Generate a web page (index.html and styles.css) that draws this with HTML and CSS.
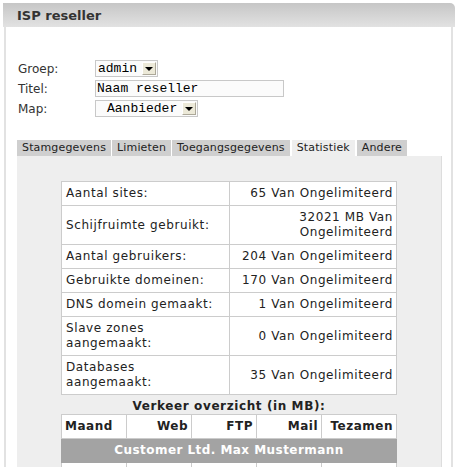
FILE: index.html
```html
<!DOCTYPE html>
<html>
<head>
<meta charset="utf-8">
<link rel="stylesheet" href="styles.css">
</head>
<body>
<div class="box">
  <div class="box-head">ISP reseller</div>
  <div class="box-body">
    <div class="form">
      <div class="frow">
        <span class="flabel">Groep:</span>
        <span class="sel sel-admin"><span class="sel-text">admin</span><span class="arrow"></span></span>
      </div>
      <div class="frow">
        <span class="flabel">Titel:</span>
        <span class="inp">Naam reseller</span>
      </div>
      <div class="frow">
        <span class="flabel">Map:</span>
        <span class="sel sel-map"><span class="sel-text">Aanbieder</span><span class="arrow"></span></span>
      </div>
    </div>
    <div class="tabs">
      <span class="tab">Stamgegevens</span>
      <span class="tab">Limieten</span>
      <span class="tab">Toegangsgegevens</span>
      <span class="tab active">Statistiek</span>
      <span class="tab">Andere</span>
    </div>
    <div class="tabpanel">
      <table class="stats">
        <tr><td class="k">Aantal sites:</td><td class="v">65 Van Ongelimiteerd</td></tr>
        <tr><td class="k">Schijfruimte gebruikt:</td><td class="v">32021 MB Van<br>Ongelimiteerd</td></tr>
        <tr><td class="k">Aantal gebruikers:</td><td class="v">204 Van Ongelimiteerd</td></tr>
        <tr><td class="k">Gebruikte domeinen:</td><td class="v">170 Van Ongelimiteerd</td></tr>
        <tr><td class="k">DNS domein gemaakt:</td><td class="v">1 Van Ongelimiteerd</td></tr>
        <tr><td class="k">Slave zones<br>aangemaakt:</td><td class="v">0 Van Ongelimiteerd</td></tr>
        <tr><td class="k">Databases<br>aangemaakt:</td><td class="v">35 Van Ongelimiteerd</td></tr>
      </table>
      <div class="traffic-title">Verkeer overzicht (in MB):</div>
      <table class="traffic">
        <tr class="th"><td class="left">Maand</td><td>Web</td><td>FTP</td><td>Mail</td><td>Tezamen</td></tr>
        <tr class="cust"><td colspan="5">Customer Ltd. Max Mustermann</td></tr>
        <tr class="row"><td class="left">&nbsp;</td><td>&nbsp;</td><td>&nbsp;</td><td>&nbsp;</td><td>&nbsp;</td></tr>
      </table>
    </div>
  </div>
</div>
</body>
</html>
```

FILE: styles.css
```css
html, body { margin: 0; padding: 0; background: #fff; }
body {
  padding: 3px 0 0 3px;
  font-family: "DejaVu Sans", Verdana, sans-serif;
  font-size: 11px;
  color: #333;
  overflow: hidden;
  height: 464px;
}
.box { width: 452px; }
.box-head {
  height: 24px;
  line-height: 25px;
  padding-left: 14px;
  font-weight: bold;
  font-size: 13px;
  color: #333;
  background: linear-gradient(#c6c6c6, #e2e2e2);
  border-radius: 0 5px 0 0;
}
.box-body {
  margin: 0 2px 0 1px;
  border-left: 2px solid #e2e2e2;
  border-right: 2px solid #e2e2e2;
  padding: 33px 10px 0 12px;
  height: 440px;
}
.form { display: flex; flex-direction: column; gap: 3px; }
.frow { display: flex; align-items: center; height: 17px; }
.flabel { width: 77px; font-size: 12px; color: #333; }
.sel, .inp {
  display: inline-flex;
  align-items: center;
  box-sizing: border-box;
  height: 17px;
  border: 1px solid #c8c8c8;
  background: #fbfbfb;
  font-family: "Liberation Mono", "Courier New", monospace;
  font-size: 13px;
  color: #000;
}
.sel-text { flex: 1; padding-left: 2px; }
.sel-admin { width: 63px; }
.sel-map { width: 103px; }
.sel-map .sel-text { padding-left: 11px; }
.inp { width: 189px; padding-left: 1px; }
.arrow {
  width: 14px;
  height: 13px;
  margin-right: 1px;
  background: #ece9d8;
  border: 1px solid #fff;
  border-right-color: #aca899;
  border-bottom-color: #aca899;
  box-sizing: border-box;
  display: flex;
  align-items: center;
  justify-content: center;
}
.arrow::after {
  content: "";
  border-left: 4px solid transparent;
  border-right: 4px solid transparent;
  border-top: 4px solid #000;
}
.tabs { display: flex; gap: 1px; margin-top: 23px; margin-left: -1px; }
.tab {
  height: 16px;
  line-height: 16px;
  padding: 0 5px;
  background: #cfcfcf;
  color: #222;
  font-size: 11px;
  letter-spacing: 0.15px;
}
.tab.active { background: #eeeeee; margin-left: 1px; margin-right: 1px; }
.tabpanel {
  background: #eeeeee;
  width: 424px;
  margin-left: -1px;
  border-right: 1px solid #dddddd;
  padding: 25px 0 0 0;
  height: 400px;
}
table { border-collapse: collapse; }
.stats {
  margin-left: 44px;
  width: 336px;
  background: #fff;
}
.stats td {
  border: 1px solid #cccccc;
  padding: 4px 4px;
  line-height: 15px;
  font-size: 12px;
  letter-spacing: 0.6px;
  color: #222;
  vertical-align: middle;
}
.stats td.k { width: 159px; }
.stats td.v { text-align: right; padding-right: 3px; }
.traffic-title {
  font-weight: bold;
  font-size: 12px;
  letter-spacing: 0.6px;
  text-align: center;
  color: #222;
  margin: 4px 0 0 44px;
  width: 336px;
  height: 15px;
  line-height: 15px;
}
.traffic {
  margin-left: 44px;
  width: 336px;
  background: #fff;
  table-layout: fixed;
}
.traffic td {
  border: 1px solid #cccccc;
  padding: 4px 3px;
  line-height: 15px;
  font-size: 12px;
  letter-spacing: 0.5px;
  text-align: right;
  color: #222;
  overflow: hidden;
  white-space: nowrap;
}
.traffic .th td { font-weight: bold; width: 58px; }
.traffic .th td:last-child { width: 68px; }
.traffic td.left { text-align: left; }
.traffic .cust td {
  background: #a3a3a3;
  color: #fff;
  text-align: center;
  font-weight: bold;
  font-size: 12px;
  letter-spacing: 0.45px;
  border-color: #a3a3a3;
}
```
